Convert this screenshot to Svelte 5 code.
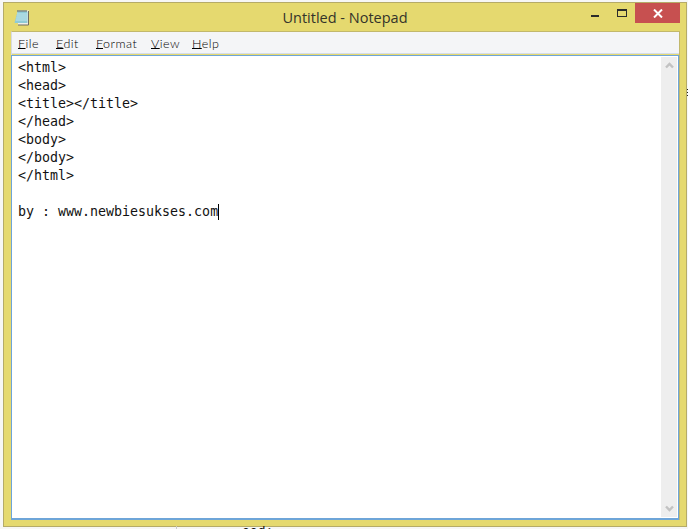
<script>
  const menus = ['File', 'Edit', 'Format', 'View', 'Help'];
  const lines = ['<html>', '<head>', '<title></title>', '</head>', '<body>', '</body>', '</html>', '', 'by : www.newbiesukses.com'];
</script>

<div class="desktop">
  <span class="marks"></span>
  <div class="notepad">
    <header class="titlebar">
      <svg class="app-icon" width="16" height="17" viewBox="0 0 16 17" aria-hidden="true">
        <path d="M3.5 1.5h11.5v14.5H4z" fill="#f0efe6" />
        <path d="M3.5 2.5h10v11.5H.5z" fill="#8fcbd6" />
        <path d="M3 5h10.5M2.6 7h11M2.2 9h11.3M1.8 11h11.7" stroke="#c4e6ec" stroke-width="1" />
        <path d="M4 1v2M6 1v2M8 1v2M10 1v2M12 1v2" stroke="#46565e" stroke-width="1" />
        <path d="M14.5 2v14H4" fill="none" stroke="#6f6d62" stroke-width="1" />
      </svg>
      <span class="title">Untitled - Notepad</span>
      <div class="controls">
        <button class="ctl min" aria-label="Minimize"><span></span></button>
        <button class="ctl max" aria-label="Maximize"><span></span></button>
        <button class="ctl close" aria-label="Close">
          <svg width="10" height="9" viewBox="0 0 10 9"><path d="M1 .5l8 8M9 .5l-8 8" stroke="#fff" stroke-width="2" /></svg>
        </button>
      </div>
    </header>

    <div class="client">
      <nav class="menubar">
        {#each menus as menu}
          <span class="menu-item"><u>{menu[0]}</u>{menu.slice(1)}</span>
        {/each}
      </nav>
      <div class="editor">
        <div class="text">
          {#each lines as line, i}
            <div class="line">{line}{#if i === lines.length - 1}<span class="caret"></span>{/if}</div>
          {/each}
        </div>
        <div class="scrollbar">
          <svg width="9" height="7" viewBox="0 0 9 7"><path d="M1 5.5l3.5-3.5 3.5 3.5" fill="none" stroke="#c2c2c2" stroke-width="2.4" /></svg>
          <svg width="9" height="7" viewBox="0 0 9 7"><path d="M1 1.5l3.5 3.5 3.5-3.5" fill="none" stroke="#c2c2c2" stroke-width="2.4" /></svg>
        </div>
      </div>
    </div>
  </div>
  <div class="behind"><span class="rule"></span>ood:</div>
</div>

<style>
  :global(body) {
    margin: 0;
    background: #fff;
  }

  .desktop {
    position: relative;
    width: 688px;
    height: 529px;
    padding: 2px 1px 0 3px;
    box-sizing: border-box;
    overflow: hidden;
    background: #f7f7f5;
  }

  .marks {
    position: absolute;
    left: 687px;
    top: 89px;
    width: 1px;
    height: 8px;
    background: repeating-linear-gradient(#222 0 1px, transparent 1px 3px);
  }

  .notepad {
    width: 684px;
    height: 525px;
    box-sizing: border-box;
    border: 1px solid #b5ab68;
    background: #e5d96f;
    padding: 0 6px 6px 7px;
    display: flex;
    flex-direction: column;
  }

  .titlebar {
    height: 28px;
    flex: none;
    position: relative;
    display: flex;
    align-items: flex-start;
    justify-content: center;
  }

  .app-icon {
    position: absolute;
    left: 3px;
    top: 6px;
  }

  .title {
    font: 14.5px/30px "Open Sans", sans-serif;
    color: #33332a;
    margin-left: -1px;
  }

  .controls {
    position: absolute;
    right: 0;
    top: 0;
    display: flex;
    align-items: stretch;
    height: 20px;
  }

  .ctl {
    border: 0;
    padding: 0;
    background: none;
    display: flex;
    align-items: center;
    justify-content: center;
  }

  .min {
    width: 30px;
    padding-left: 6px;
  }

  .min span {
    width: 8px;
    height: 2px;
    margin-top: 6px;
    background: #2b2b2b;
  }

  .max {
    width: 28px;
    padding-left: 2px;
  }

  .max span {
    width: 8px;
    height: 5px;
    border: 1px solid #2b2b2b;
    border-top-width: 2px;
  }

  .close {
    width: 45px;
    background: #c75050;
  }

  .client {
    flex: 1;
    display: flex;
    flex-direction: column;
    min-height: 0;
    border-top: 1px solid #c2b86c;
    border-left: 1px solid #d8dbe0;
    border-right: 1px solid #c2b86c;
  }

  .menubar {
    height: 22px;
    flex: none;
    box-sizing: border-box;
    background: #f4f5f7;
    border-bottom: 1px solid #d5dde8;
    display: grid;
    grid-template-columns: 38px 40px 55px 41px auto;
    padding-left: 6px;
    font: 300 12.5px/23px Lato, sans-serif;
    letter-spacing: 0.5px;
    color: #000;
  }

  .menu-item u {
    text-decoration-thickness: 1px;
    text-underline-offset: 0;
  }

  .editor {
    flex: 1;
    min-height: 0;
    margin-top: 1px;
    margin-left: -1px;
    background: #fff;
    border: 1px solid #6ea5d8;
    border-bottom-width: 2px;
    display: flex;
    padding: 1px 0 0;
  }

  .text {
    flex: 1;
    padding: 2px 0 0 6px;
    font: 13.3px/18px "DejaVu Sans Mono", monospace;
    color: #111;
  }

  .line {
    height: 18px;
    white-space: pre;
  }

  .caret {
    display: inline-block;
    width: 1px;
    height: 16px;
    background: #000;
    vertical-align: -4px;
  }

  .scrollbar {
    width: 16px;
    margin-right: 1px;
    margin-bottom: 1px;
    background: #eeeeee;
    display: flex;
    flex-direction: column;
    justify-content: space-between;
    align-items: center;
    padding: 5px 0;
    box-sizing: border-box;
  }

  .behind {
    height: 3px;
    overflow: hidden;
    margin-top: -1px;
    padding-left: 239px;
    font: 13px/9px "DejaVu Sans Mono", monospace;
    color: #111;
  }

  .rule {
    position: absolute;
    left: 176px;
    bottom: 0;
    width: 1px;
    height: 3px;
    background: #c8c8c8;
  }
</style>
